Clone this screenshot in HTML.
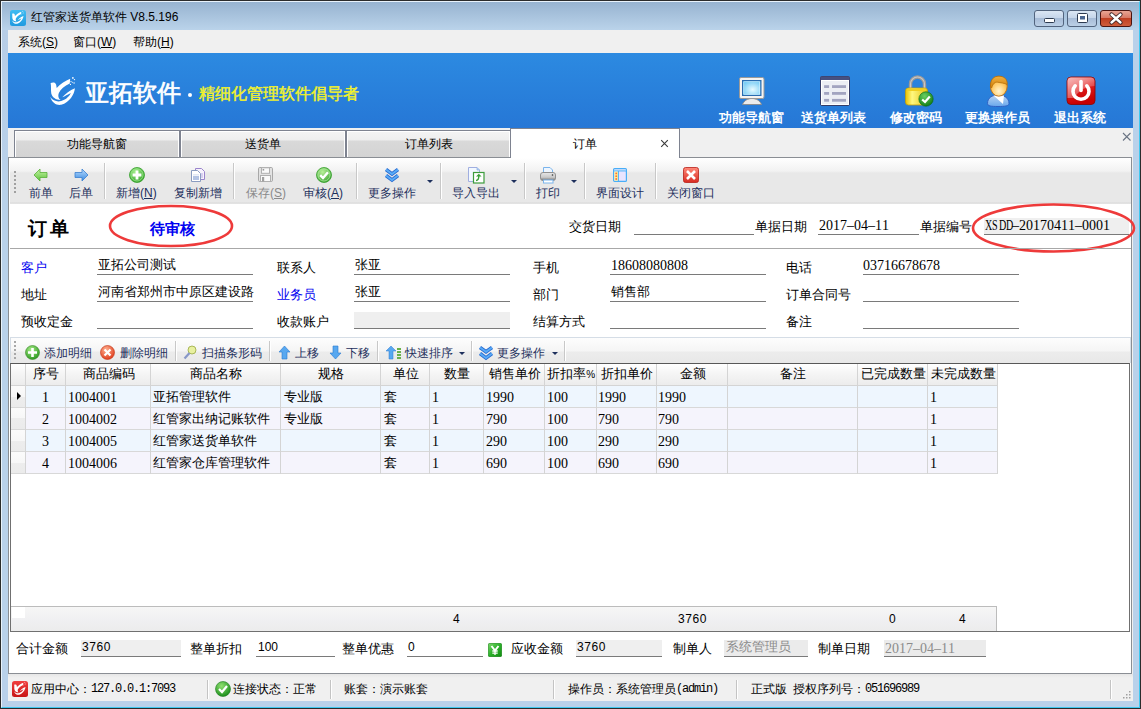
<!DOCTYPE html>
<html><head><meta charset="utf-8">
<style>
*{margin:0;padding:0;box-sizing:border-box}
html,body{width:1141px;height:709px;overflow:hidden}
body{position:relative;background:#b9d1ea;font-family:"Liberation Sans",sans-serif;font-size:13px;color:#000}
.a{position:absolute;white-space:nowrap}
.t{position:absolute;white-space:nowrap;line-height:13px;font-size:13px}
.m{font-family:"Liberation Mono",monospace}
.s{font-family:"Liberation Serif",serif}
</style></head><body>
<!-- window frame -->
<div class="a" style="left:0;top:0;width:1141px;height:709px;border:1px solid #2b2b2b;"></div>
<div class="a" style="left:1px;top:1px;width:1139px;height:707px;border:1px solid #e8f2fb;border-right-color:#3fc8f0;border-bottom-color:#3fc8f0"></div>
<div class="a" style="left:2px;top:2px;width:1137px;height:28px;background:linear-gradient(#97b3d0,#bad3ea)"></div>
<div class="a" style="left:2px;top:30px;width:6px;height:677px;background:linear-gradient(#b7cde6,#b9d1ea 20%)"></div>
<div class="a" style="left:1133px;top:30px;width:6px;height:677px;background:#b9d1ea"></div>

<!-- title -->
<svg class="a" style="left:10px;top:10px" width="16" height="16" viewBox="0 0 16 16"><defs><linearGradient id="lb" x1="0" y1="0" x2="0" y2="1"><stop offset="0" stop-color="#40bcf2"/><stop offset="1" stop-color="#1e9ae0"/></linearGradient></defs><rect x="0" y="0" width="16" height="16" rx="2.5" fill="url(#lb)"/><svg x="0.5" y="0" width="15" height="15" viewBox="40 60 600 600"><g fill="#fff"><path d="M105,205 C150,190 195,190 208,240 L218,300 C290,220 380,160 470,125 L462,215 C360,262 292,322 258,392 C238,442 248,498 292,522 C200,522 132,472 117,402 C106,332 118,262 105,205 Z"/><path d="M558,302 C545,420 462,562 302,612 C222,625 140,592 98,468 C150,542 232,562 302,542 C402,512 452,452 482,392 C422,422 372,452 322,472 C382,402 462,342 558,302 Z"/><circle cx="520" cy="110" r="16"/><circle cx="550" cy="142" r="13"/><circle cx="542" cy="205" r="13"/><circle cx="485" cy="178" r="12"/><circle cx="475" cy="232" r="11"/></g></svg></svg>
<div class="a" style="left:31px;top:11px;font-size:12px;line-height:13px;color:#000">红管家送货单软件 V8.5.196</div>

<!-- window buttons -->
<svg class="a" style="left:1033px;top:9px" width="100" height="19" viewBox="0 0 100 19">
<defs>
<linearGradient id="wbg" x1="0" y1="0" x2="0" y2="1"><stop offset="0" stop-color="#dce7f4"/><stop offset="0.45" stop-color="#c6d6ea"/><stop offset="0.5" stop-color="#a8bdd8"/><stop offset="1" stop-color="#bcd0e6"/></linearGradient>
<linearGradient id="wbr" x1="0" y1="0" x2="0" y2="1"><stop offset="0" stop-color="#eaa898"/><stop offset="0.45" stop-color="#d87a66"/><stop offset="0.5" stop-color="#bf3f22"/><stop offset="1" stop-color="#d0603e"/></linearGradient>
</defs>
<rect x="1.5" y="1.5" width="29" height="16" rx="2.5" fill="url(#wbg)" stroke="#52647e" stroke-width="1"/>
<rect x="34.5" y="1.5" width="29" height="16" rx="2.5" fill="url(#wbg)" stroke="#52647e" stroke-width="1"/>
<rect x="67.5" y="1.5" width="31" height="16" rx="2.5" fill="url(#wbr)" stroke="#4a1410" stroke-width="1"/>
<rect x="11.5" y="9.5" width="10" height="4" rx="1" fill="#fff" stroke="#2c3a50" stroke-width="1"/>
<rect x="44.5" y="4.5" width="10" height="9" rx="1" fill="#fff" stroke="#2c3a50" stroke-width="1"/>
<rect x="47" y="7" width="5" height="3.5" fill="#4a6690" />
<path d="M78.5 5.5 L87.5 13.5 M87.5 5.5 L78.5 13.5" stroke="#3a2020" stroke-width="4.2" stroke-linecap="round"/>
<path d="M78.5 5.5 L87.5 13.5 M87.5 5.5 L78.5 13.5" stroke="#fff" stroke-width="2.4" stroke-linecap="round"/>
</svg>
<!-- menu bar -->
<div class="a" style="left:8px;top:30px;width:1125px;height:23px;background:#f0f0f0"></div>
<div class="a" style="left:18px;top:36px;font-size:12px;line-height:13px">系统(<u>S</u>)</div>
<div class="a" style="left:73px;top:36px;font-size:12px;line-height:13px">窗口(<u>W</u>)</div>
<div class="a" style="left:133px;top:36px;font-size:12px;line-height:13px">帮助(<u>H</u>)</div>

<!-- banner -->
<div class="a" style="left:8px;top:53px;width:1125px;height:75px;background:linear-gradient(#2c8ae1,#2677d6)"></div>


<!-- banner content -->
<svg class="a" style="left:45px;top:72px" width="40" height="38" viewBox="0 0 746 709"><g fill="#fff">
<path d="M105,205 C150,190 195,190 208,240 L218,300 C290,220 380,160 470,125 L462,215 C360,262 292,322 258,392 C238,442 248,498 292,522 C200,522 132,472 117,402 C106,332 118,262 105,205 Z"/>
<path d="M558,302 C545,420 462,562 302,612 C222,625 140,592 98,468 C150,542 232,562 302,542 C402,512 452,452 482,392 C422,422 372,452 322,472 C382,402 462,342 558,302 Z"/>
<circle cx="520" cy="110" r="16"/><circle cx="550" cy="142" r="13"/><circle cx="542" cy="205" r="13"/><circle cx="485" cy="178" r="12"/><circle cx="475" cy="232" r="11"/><circle cx="510" cy="190" r="10"/>
</g></svg>
<div class="a" style="left:85px;top:79px;font-size:23.5px;line-height:28px;color:#fff;letter-spacing:0px;-webkit-text-stroke:0.7px #fff">亚拓软件</div>
<div class="a" style="left:188px;top:93px;width:4px;height:4px;border-radius:2px;background:#fff"></div>
<div class="a" style="left:199px;top:84px;font-size:16px;line-height:20px;color:#f2f22a;-webkit-text-stroke:0.45px #f2f22a">精细化管理软件倡导者</div>

<svg class="a" style="left:738px;top:76px" width="28" height="30" viewBox="0 0 28 30">
 <defs><radialGradient id="scr" cx="0.55" cy="0.6" r="0.7"><stop offset="0" stop-color="#e8fbff"/><stop offset="1" stop-color="#62c4f4"/></radialGradient></defs>
 <path d="M4.5 28.5 C6 24.5 10 22.5 14 22.5 C18 22.5 22 24.5 23.5 28.5Z" fill="#ececec" stroke="#8a8a8a" stroke-width="0.9"/>
 <rect x="1.5" y="1.5" width="24.5" height="21" rx="1.5" fill="#f6f4f2" stroke="#9a9a9a" stroke-width="1"/>
 <rect x="4.6" y="4.6" width="18.3" height="14.8" fill="url(#scr)" stroke="#2a6cb0" stroke-width="1.2"/>
 <rect x="5.8" y="5.8" width="15.9" height="12.4" fill="none" stroke="#d8f4ff" stroke-width="0.6"/>
</svg>
<div class="a" style="left:719px;top:110px;font-size:13px;line-height:16px;font-weight:bold;color:#fff">功能导航窗</div>

<svg class="a" style="left:820px;top:76px" width="30" height="30" viewBox="0 0 30 30">
 <rect x="0.5" y="0.5" width="29" height="29" rx="1.5" fill="#eceef4" stroke="#343c68"/>
 <rect x="0.5" y="0.5" width="29" height="4" fill="#465080"/>
 <rect x="1.5" y="4.5" width="27" height="24" fill="none" stroke="#fff" stroke-width="1"/>
 <rect x="4.1" y="9.2" width="5" height="2.8" fill="#a2a4c0"/><rect x="12" y="9.2" width="14" height="2.8" fill="#a2a4c0"/>
 <rect x="4.1" y="16" width="5" height="2.8" fill="#a2a4c0"/><rect x="12" y="16" width="14" height="2.8" fill="#a2a4c0"/>
 <rect x="4.1" y="22.9" width="5" height="2.8" fill="#a2a4c0"/><rect x="12" y="22.9" width="14" height="2.8" fill="#a2a4c0"/>
</svg>
<div class="a" style="left:801px;top:110px;font-size:13px;line-height:16px;font-weight:bold;color:#fff">送货单列表</div>

<svg class="a" style="left:904px;top:75px" width="30" height="32" viewBox="0 0 30 32">
 <defs><linearGradient id="lk" x1="0" y1="0" x2="1" y2="0"><stop offset="0" stop-color="#e8c000"/><stop offset="0.3" stop-color="#fff880"/><stop offset="1" stop-color="#e0c010"/></linearGradient>
 <radialGradient id="gc" cx="0.4" cy="0.3" r="0.75"><stop offset="0" stop-color="#6ad060"/><stop offset="1" stop-color="#0e7a14"/></radialGradient></defs>
 <path d="M6.5 14 V9 A7 7 0 0 1 20.5 9 V14" fill="none" stroke="#9a9a9a" stroke-width="3.4"/>
 <path d="M6.5 14 V9 A7 7 0 0 1 20.5 9 V14" fill="none" stroke="#c8c8c8" stroke-width="1.2"/>
 <rect x="1.5" y="13" width="22" height="17" rx="3" fill="url(#lk)" stroke="#c8a000" stroke-width="0.8"/>
 <rect x="2.5" y="13.5" width="20" height="2.5" rx="1" fill="#f0d020"/>
 <circle cx="22" cy="24" r="7.2" fill="url(#gc)" stroke="#0a6a10" stroke-width="0.6"/>
 <path d="M18.2 24.5 L21 27 L25.8 21.5" fill="none" stroke="#fff" stroke-width="2.2"/>
</svg>
<div class="a" style="left:890px;top:110px;font-size:13px;line-height:16px;font-weight:bold;color:#fff">修改密码</div>

<svg class="a" style="left:985px;top:74px" width="26" height="34" viewBox="0 0 26 34">
 <defs><radialGradient id="fc" cx="0.5" cy="0.75" r="0.7"><stop offset="0" stop-color="#fff4d0"/><stop offset="0.6" stop-color="#ffc860"/><stop offset="1" stop-color="#f0a018"/></radialGradient>
 <linearGradient id="bd" x1="0" y1="0" x2="0" y2="1"><stop offset="0" stop-color="#b8d4f4"/><stop offset="1" stop-color="#6aa8ec"/></linearGradient>
 <linearGradient id="hr" x1="0" y1="0" x2="0" y2="1"><stop offset="0" stop-color="#f0b040"/><stop offset="1" stop-color="#d08008"/></linearGradient></defs>
 <path d="M2.5 29.5 C2.5 24 7 21 13 21 C19 21 24 24 24 29.5 C24 32 20 32.5 13 32.5 C6 32.5 2.5 32 2.5 29.5Z" fill="url(#bd)" stroke="#2c5cc0" stroke-width="0.9"/>
 <path d="M8.5 21.5 L18 30 L19 21.5Z" fill="#fff"/>
 <ellipse cx="13.8" cy="12.2" rx="8.4" ry="10" fill="url(#fc)" stroke="#c07010" stroke-width="0.9"/>
 <path d="M5.6 13 C5 5 9 2.2 14 2.2 C19 2.2 22.6 5 22.2 10.5 C19 9 15.5 8.8 12.5 8.2 C10 7.8 8 9.5 6.6 14Z" fill="url(#hr)" stroke="#b06a08" stroke-width="0.7"/>
</svg>
<div class="a" style="left:965px;top:110px;font-size:13px;line-height:16px;font-weight:bold;color:#fff">更换操作员</div>

<svg class="a" style="left:1066px;top:76px" width="30" height="30" viewBox="0 0 30 30">
 <defs><linearGradient id="pw" x1="0" y1="0" x2="0.3" y2="1"><stop offset="0" stop-color="#e87070"/><stop offset="0.45" stop-color="#e02020"/><stop offset="1" stop-color="#c80000"/></linearGradient>
 <linearGradient id="pwh" x1="0" y1="0" x2="1" y2="1"><stop offset="0" stop-color="#ffd0d0" stop-opacity="0.75"/><stop offset="1" stop-color="#ffffff" stop-opacity="0"/></linearGradient></defs>
 <rect x="1" y="1" width="28" height="27.5" rx="4" fill="url(#pw)" stroke="#8a0a0a" stroke-width="0.9"/>
 <path d="M1.5 5 Q1.5 1.5 5 1.5 H25 Q28.5 1.5 28.5 5 V10 Q16 10 8 22 H1.5Z" fill="url(#pwh)"/>
 <path d="M9.2 9.8 A8 8 0 1 0 20.8 9.8" fill="none" stroke="#fff" stroke-width="3.6" stroke-linecap="round"/>
 <path d="M15 5.5 V14.5" stroke="#fff" stroke-width="3.6" stroke-linecap="round"/>
</svg>
<div class="a" style="left:1054px;top:110px;font-size:13px;line-height:16px;font-weight:bold;color:#fff">退出系统</div>

<!-- tab strip -->
<div class="a" style="left:8px;top:128px;width:1125px;height:546px;background:#f0f0f0"></div>


<!-- tabs -->
<div class="a" style="left:14px;top:130px;width:166px;height:28px;border:1px solid #7e8390;border-bottom:none;background:linear-gradient(#f4f4f4 0px,#eeeeee 9px,#d9d9d9 10px,#d3d3d3 27px);box-shadow:inset 1px 1px 0 #fff,inset -1px 0 0 #fff"></div>
<div class="a" style="left:67px;top:138px;font-size:12px;line-height:12px">功能导航窗</div>
<div class="a" style="left:180px;top:130px;width:166px;height:28px;border:1px solid #7e8390;border-bottom:none;background:linear-gradient(#f4f4f4 0px,#eeeeee 9px,#d9d9d9 10px,#d3d3d3 27px);box-shadow:inset 1px 1px 0 #fff,inset -1px 0 0 #fff"></div>
<div class="a" style="left:245px;top:138px;font-size:12px;line-height:12px">送货单</div>
<div class="a" style="left:346px;top:130px;width:165px;height:28px;border:1px solid #7e8390;border-bottom:none;background:linear-gradient(#f4f4f4 0px,#eeeeee 9px,#d9d9d9 10px,#d3d3d3 27px);box-shadow:inset 1px 1px 0 #fff,inset -1px 0 0 #fff"></div>
<div class="a" style="left:405px;top:138px;font-size:12px;line-height:12px">订单列表</div>
<!-- content panel -->
<div class="a" style="left:8px;top:157px;width:1124px;height:517px;background:#fff;border:1px solid #8a8e94"></div>


<div class="a" style="left:510px;top:128px;width:170px;height:30px;border:1px solid #7e8390;border-bottom:none;background:#fff"></div>
<div class="t" style="font-size:12px;line-height:12px;left:573px;top:138px;">订单</div>
<svg class="a" style="left:660px;top:139px" width="10" height="10" viewBox="0 0 10 10"><path d="M1.2 1.2 L7.8 7.8 M7.8 1.2 L1.2 7.8" stroke="#3a3a3a" stroke-width="1.1"/></svg>
<svg class="a" style="left:1122px;top:132px" width="10" height="10" viewBox="0 0 10 10"><path d="M1 1 L8.5 8.5 M8.5 1 L1 8.5" stroke="#6a7484" stroke-width="1.1"/></svg>

<!-- toolbar -->
<div class="a" style="left:10px;top:158px;width:1121px;height:46px;background:linear-gradient(#ffffff 0px,#f2f2f2 13px,#e8e8e8 15px,#e8e8e8 44px,#d9d9d9 45px,#ececec 46px)"></div>
<div class="a" style="left:14px;top:171px;width:2px;height:22px;background:repeating-linear-gradient(#a0a0a0 0 2px,transparent 2px 4px)"></div>

<!-- toolbar buttons -->
<svg class="a" style="left:33px;top:168px" width="15" height="14" viewBox="0 0 15 14"><defs><linearGradient id="ga" x1="0" y1="0" x2="0" y2="1"><stop offset="0" stop-color="#c8f5a8"/><stop offset="1" stop-color="#5cc23a"/></linearGradient></defs><path d="M1 7 L7 1 V4.5 H14 V9.5 H7 V13Z" fill="url(#ga)" stroke="#58b038" stroke-width="0.8"/></svg>
<div class="t" style="font-size:12px;line-height:12px;left:29px;top:187px;color:#1d2f5c">前单</div>
<svg class="a" style="left:74px;top:168px" width="15" height="14" viewBox="0 0 15 14"><defs><linearGradient id="ba" x1="0" y1="0" x2="0" y2="1"><stop offset="0" stop-color="#b8dcff"/><stop offset="1" stop-color="#3a8ae0"/></linearGradient></defs><path d="M14 7 L8 1 V4.5 H1 V9.5 H8 V13Z" fill="url(#ba)" stroke="#3a80d0" stroke-width="0.8"/></svg>
<div class="t" style="font-size:12px;line-height:12px;left:69px;top:187px;color:#1d2f5c">后单</div>
<div class="a" style="left:104px;top:163px;width:1px;height:36px;background:#c8c8c8;box-shadow:1px 0 0 #fff"></div>
<svg class="a" style="left:129px;top:167px" width="16" height="16" viewBox="0 0 16 16"><defs><radialGradient id="gp" cx="0.4" cy="0.3" r="0.75"><stop offset="0" stop-color="#a8f090"/><stop offset="1" stop-color="#30a028"/></radialGradient></defs><circle cx="8" cy="8" r="7.5" fill="url(#gp)" stroke="#36a02c" stroke-width="0.8"/><circle cx="8" cy="8" r="6" fill="none" stroke="#98e488" stroke-width="0.8"/><path d="M8 3.6 V12.4 M3.6 8 H12.4" stroke="#fff" stroke-width="2.8"/></svg>
<div class="t" style="font-size:12px;line-height:12px;left:116px;top:187px;color:#1d2f5c">新增(<u>N</u>)</div>
<svg class="a" style="left:190px;top:167px" width="16" height="16" viewBox="0 0 16 16"><path d="M5.5 1.5 H11.5 L14.5 4.5 V12.5 H5.5Z" fill="#f6f2fc" stroke="#9a84cc" stroke-width="1"/><rect x="11" y="6" width="2" height="5" fill="#d8cff0"/><path d="M1.5 3.5 H7.5 L10.5 6.5 V14.5 H1.5Z" fill="#fff" stroke="#8a9cc0" stroke-width="1"/><rect x="3" y="9" width="6" height="4" fill="#b4c4e4"/><rect x="3" y="7.5" width="6" height="0.8" fill="#c8d4ec"/></svg>
<div class="t" style="font-size:12px;line-height:12px;left:174px;top:187px;color:#1d2f5c">复制新增</div>
<div class="a" style="left:233px;top:163px;width:1px;height:36px;background:#c8c8c8;box-shadow:1px 0 0 #fff"></div>
<svg class="a" style="left:258px;top:167px" width="15" height="15" viewBox="0 0 15 15"><rect x="0.5" y="0.5" width="14" height="14" rx="1.2" fill="#e2e2e2" stroke="#a8a8a8" stroke-width="1"/><rect x="3.5" y="0.8" width="8" height="5.5" fill="#fafafa" stroke="#b0b0b0" stroke-width="1"/><rect x="4.6" y="2" width="1.6" height="1.6" fill="#999"/><rect x="2.5" y="8.5" width="10" height="6" fill="#fafafa" stroke="#b0b0b0" stroke-width="1"/><rect x="4" y="10" width="2.2" height="4.5" fill="#a0a0a0"/></svg>
<div class="t" style="font-size:12px;line-height:12px;left:246px;top:187px;color:#8a8a8a">保存(<u>S</u>)</div>
<svg class="a" style="left:316px;top:167px" width="16" height="16" viewBox="0 0 16 16"><defs><radialGradient id="gk" cx="0.4" cy="0.3" r="0.75"><stop offset="0" stop-color="#b8f098"/><stop offset="1" stop-color="#38a030"/></radialGradient></defs><circle cx="8" cy="8" r="7.5" fill="url(#gk)" stroke="#36a02c" stroke-width="0.8"/><circle cx="8" cy="8" r="6" fill="none" stroke="#a8e898" stroke-width="0.8"/><path d="M4.2 8.2 L7 11 L12 5.2" fill="none" stroke="#fff" stroke-width="2.4"/></svg>
<div class="t" style="font-size:12px;line-height:12px;left:303px;top:187px;color:#1d2f5c">审核(<u>A</u>)</div>
<div class="a" style="left:356px;top:163px;width:1px;height:36px;background:#c8c8c8;box-shadow:1px 0 0 #fff"></div>
<svg class="a" style="left:384px;top:166px" width="16" height="17" viewBox="0 0 16 17"><g fill="none" stroke-linejoin="miter" stroke-linecap="butt"><path d="M2 3.5 L8 8 L14 3.5" stroke="#2c6cd0" stroke-width="3.6"/><path d="M2 3.5 L8 8 L14 3.5" stroke="#58acf8" stroke-width="1.8"/><path d="M2 9.5 L8 14 L14 9.5" stroke="#2c6cd0" stroke-width="3.6"/><path d="M2 9.5 L8 14 L14 9.5" stroke="#58acf8" stroke-width="1.8"/></g></svg>
<div class="t" style="font-size:12px;line-height:12px;left:368px;top:187px;color:#1d2f5c">更多操作</div>
<div class="a" style="left:427px;top:180px;width:0;height:0;border-left:3px solid transparent;border-right:3px solid transparent;border-top:3px solid #1d2f5c"></div>
<div class="a" style="left:440px;top:163px;width:1px;height:36px;background:#c8c8c8;box-shadow:1px 0 0 #fff"></div>
<svg class="a" style="left:467px;top:166px" width="18" height="18" viewBox="0 0 18 18"><path d="M1.5 1.5 H10 L12.5 4 V15.5 H1.5Z" fill="#f2f8ff" stroke="#a0aee0" stroke-width="1"/><path d="M10 1.5 V4 H12.5" fill="#9cd4f8" stroke="#a0aee0" stroke-width="0.8"/><rect x="6.5" y="6.5" width="10.5" height="10.5" fill="#fff" stroke="#3c9c3c" stroke-width="1.2"/><path d="M9 10.5 L11.8 7.8 L14.6 10.5Z" fill="#3aa03a"/><path d="M11.8 10 C11.8 13 11 14.5 9 14.5" fill="none" stroke="#3aa03a" stroke-width="1.4"/></svg>
<div class="t" style="font-size:12px;line-height:12px;left:452px;top:187px;color:#1d2f5c">导入导出</div>
<div class="a" style="left:511px;top:180px;width:0;height:0;border-left:3px solid transparent;border-right:3px solid transparent;border-top:3px solid #1d2f5c"></div>
<div class="a" style="left:524px;top:163px;width:1px;height:36px;background:#c8c8c8;box-shadow:1px 0 0 #fff"></div>
<svg class="a" style="left:539px;top:166px" width="18" height="18" viewBox="0 0 18 18"><defs><linearGradient id="pr" x1="0" y1="0" x2="0" y2="1"><stop offset="0" stop-color="#e8e8e8"/><stop offset="0.6" stop-color="#c8c8c8"/><stop offset="1" stop-color="#707070"/></linearGradient></defs><path d="M4.5 1.5 H11 L13.5 4 V7 H4.5Z" fill="#eef6ff" stroke="#7ab4ec" stroke-width="1"/><rect x="1.5" y="6.5" width="15" height="8" rx="2.5" fill="url(#pr)" stroke="#909090" stroke-width="1"/><circle cx="13.5" cy="9" r="0.8" fill="#333"/><rect x="4.5" y="14" width="9.5" height="3" fill="#fff" stroke="#7ab4ec" stroke-width="1"/></svg>
<div class="t" style="font-size:12px;line-height:12px;left:536px;top:187px;color:#1d2f5c">打印</div>
<div class="a" style="left:571px;top:180px;width:0;height:0;border-left:3px solid transparent;border-right:3px solid transparent;border-top:3px solid #1d2f5c"></div>
<div class="a" style="left:584px;top:163px;width:1px;height:36px;background:#c8c8c8;box-shadow:1px 0 0 #fff"></div>
<svg class="a" style="left:613px;top:168px" width="14" height="14" viewBox="0 0 14 14"><rect x="0.6" y="0.6" width="12.8" height="12.8" rx="1" fill="#e8e4ff" stroke="#48aef8" stroke-width="1.2"/><rect x="1.5" y="1.5" width="11" height="1.6" fill="#bcdcfc"/><line x1="0.6" y1="3" x2="13.4" y2="3" stroke="#48aef8" stroke-width="0.8"/><rect x="1.4" y="3.6" width="3.6" height="9" fill="#fff090"/><line x1="5.4" y1="3" x2="5.4" y2="13.4" stroke="#48aef8" stroke-width="1"/><circle cx="3.2" cy="5.4" r="0.9" fill="#ff6a3a"/><circle cx="3.2" cy="8.2" r="0.9" fill="#ff6a3a"/><circle cx="3.2" cy="11" r="0.9" fill="#ff6a3a"/></svg>
<div class="t" style="font-size:12px;line-height:12px;left:596px;top:187px;color:#1d2f5c">界面设计</div>
<div class="a" style="left:655px;top:163px;width:1px;height:36px;background:#c8c8c8;box-shadow:1px 0 0 #fff"></div>
<svg class="a" style="left:683px;top:167px" width="16" height="16" viewBox="0 0 16 16"><defs><linearGradient id="rc" x1="0" y1="0" x2="0" y2="1"><stop offset="0" stop-color="#ff8a7a"/><stop offset="1" stop-color="#d82a20"/></linearGradient></defs><rect x="0.5" y="0.5" width="15" height="15" rx="2" fill="url(#rc)" stroke="#b82018" stroke-width="0.8"/><path d="M4 4 L12 12 M12 4 L4 12" stroke="#fff" stroke-width="2.6"/></svg>
<div class="t" style="font-size:12px;line-height:12px;left:667px;top:187px;color:#1d2f5c">关闭窗口</div>

<!-- header -->
<div class="a" style="left:28px;top:218px;font-size:19px;line-height:22px;font-weight:bold;letter-spacing:3px">订单</div>
<div class="a" style="left:150px;top:220px;font-size:15px;line-height:17px;font-weight:bold;color:#0000f0">待审核</div>
<svg class="a" style="left:108px;top:204px" width="126" height="44" viewBox="0 0 126 44"><ellipse cx="63" cy="22" rx="61" ry="20" fill="none" stroke="#ee3a3a" stroke-width="2.6"/></svg>
<div class="t" style="left:569px;top:220px;color:#000;">交货日期</div>
<div class="a" style="left:634px;top:218px;width:120px;height:17px;border-bottom:1px solid #7a7a7a;"></div>
<div class="t" style="left:755px;top:220px;color:#000;">单据日期</div>
<div class="a" style="left:818px;top:218px;width:101px;height:17px;border-bottom:1px solid #7a7a7a;"></div>
<div class="a" style="left:819px;top:219px;font-family:'Liberation Serif',serif;font-size:14px;line-height:13px;white-space:nowrap;color:#000"><span style="display:inline-block;width:7px;text-align:center">2</span><span style="display:inline-block;width:7px;text-align:center">0</span><span style="display:inline-block;width:7px;text-align:center">1</span><span style="display:inline-block;width:7px;text-align:center">7</span><span style="display:inline-block;width:7px;text-align:center">–</span><span style="display:inline-block;width:7px;text-align:center">0</span><span style="display:inline-block;width:7px;text-align:center">4</span><span style="display:inline-block;width:7px;text-align:center">–</span><span style="display:inline-block;width:7px;text-align:center">1</span><span style="display:inline-block;width:7px;text-align:center">1</span></div>
<div class="t" style="left:920px;top:220px;color:#000;">单据编号</div>
<div class="a" style="left:984px;top:218px;width:145px;height:17px;border-bottom:1px solid #7a7a7a;background:#efefef;"></div>
<div class="a" style="left:984px;top:219px;font-family:'Liberation Serif',serif;font-size:14px;line-height:13px;white-space:nowrap;color:#000"><span style="display:inline-block;width:7px;text-align:center;transform:scaleX(0.72)">X</span><span style="display:inline-block;width:7px;text-align:center;transform:scaleX(0.72)">S</span><span style="display:inline-block;width:7px;text-align:center;transform:scaleX(0.72)">D</span><span style="display:inline-block;width:7px;text-align:center;transform:scaleX(0.72)">D</span><span style="display:inline-block;width:7px;text-align:center">–</span><span style="display:inline-block;width:7px;text-align:center">2</span><span style="display:inline-block;width:7px;text-align:center">0</span><span style="display:inline-block;width:7px;text-align:center">1</span><span style="display:inline-block;width:7px;text-align:center">7</span><span style="display:inline-block;width:7px;text-align:center">0</span><span style="display:inline-block;width:7px;text-align:center">4</span><span style="display:inline-block;width:7px;text-align:center">1</span><span style="display:inline-block;width:7px;text-align:center">1</span><span style="display:inline-block;width:7px;text-align:center">–</span><span style="display:inline-block;width:7px;text-align:center">0</span><span style="display:inline-block;width:7px;text-align:center">0</span><span style="display:inline-block;width:7px;text-align:center">0</span><span style="display:inline-block;width:7px;text-align:center">1</span></div>
<svg class="a" style="left:971px;top:202px" width="165" height="52" viewBox="0 0 165 52"><ellipse cx="82.5" cy="26" rx="80.5" ry="23.5" fill="none" stroke="#ee3a3a" stroke-width="2.6"/></svg>
<div class="a" style="left:10px;top:248px;width:1121px;height:1px;background:#a8a8a8"></div>
<div class="t" style="left:21px;top:261px;color:#0000f0;">客户</div>
<div class="t" style="left:21px;top:288px;color:#000;">地址</div>
<div class="t" style="left:21px;top:315px;color:#000;">预收定金</div>
<div class="a" style="left:97px;top:258px;width:156px;height:17px;border-bottom:1px solid #7a7a7a;"></div>
<div class="a" style="left:97px;top:285px;width:156px;height:17px;border-bottom:1px solid #7a7a7a;"></div>
<div class="a" style="left:97px;top:312px;width:156px;height:17px;border-bottom:1px solid #7a7a7a;"></div>
<div class="t" style="left:98px;top:258px;color:#000;">亚拓公司测试</div>
<div class="t" style="left:98px;top:285px;color:#000;">河南省郑州市中原区建设路</div>
<div class="t" style="left:277px;top:261px;color:#000;">联系人</div>
<div class="t" style="left:277px;top:288px;color:#0000f0;">业务员</div>
<div class="t" style="left:277px;top:315px;color:#000;">收款账户</div>
<div class="a" style="left:354px;top:258px;width:156px;height:17px;border-bottom:1px solid #7a7a7a;"></div>
<div class="a" style="left:354px;top:285px;width:156px;height:17px;border-bottom:1px solid #7a7a7a;"></div>
<div class="a" style="left:354px;top:312px;width:156px;height:17px;border-bottom:1px solid #7a7a7a;background:#efefef;"></div>
<div class="t" style="left:355px;top:258px;color:#000;">张亚</div>
<div class="t" style="left:355px;top:285px;color:#000;">张亚</div>
<div class="t" style="left:533px;top:261px;color:#000;">手机</div>
<div class="t" style="left:533px;top:288px;color:#000;">部门</div>
<div class="t" style="left:533px;top:315px;color:#000;">结算方式</div>
<div class="a" style="left:610px;top:258px;width:156px;height:17px;border-bottom:1px solid #7a7a7a;"></div>
<div class="a" style="left:610px;top:285px;width:156px;height:17px;border-bottom:1px solid #7a7a7a;"></div>
<div class="a" style="left:610px;top:312px;width:156px;height:17px;border-bottom:1px solid #7a7a7a;"></div>
<div class="a" style="left:611px;top:259px;font-family:'Liberation Serif',serif;font-size:14px;line-height:13px;white-space:nowrap;color:#000"><span style="display:inline-block;width:7px;text-align:center">1</span><span style="display:inline-block;width:7px;text-align:center">8</span><span style="display:inline-block;width:7px;text-align:center">6</span><span style="display:inline-block;width:7px;text-align:center">0</span><span style="display:inline-block;width:7px;text-align:center">8</span><span style="display:inline-block;width:7px;text-align:center">0</span><span style="display:inline-block;width:7px;text-align:center">8</span><span style="display:inline-block;width:7px;text-align:center">0</span><span style="display:inline-block;width:7px;text-align:center">8</span><span style="display:inline-block;width:7px;text-align:center">0</span><span style="display:inline-block;width:7px;text-align:center">8</span></div>
<div class="t" style="left:611px;top:285px;color:#000;">销售部</div>
<div class="t" style="left:786px;top:261px;color:#000;">电话</div>
<div class="t" style="left:786px;top:288px;color:#000;">订单合同号</div>
<div class="t" style="left:786px;top:315px;color:#000;">备注</div>
<div class="a" style="left:863px;top:258px;width:156px;height:17px;border-bottom:1px solid #7a7a7a;"></div>
<div class="a" style="left:863px;top:285px;width:156px;height:17px;border-bottom:1px solid #7a7a7a;"></div>
<div class="a" style="left:863px;top:312px;width:156px;height:17px;border-bottom:1px solid #7a7a7a;"></div>
<div class="a" style="left:863px;top:259px;font-family:'Liberation Serif',serif;font-size:14px;line-height:13px;white-space:nowrap;color:#000"><span style="display:inline-block;width:7px;text-align:center">0</span><span style="display:inline-block;width:7px;text-align:center">3</span><span style="display:inline-block;width:7px;text-align:center">7</span><span style="display:inline-block;width:7px;text-align:center">1</span><span style="display:inline-block;width:7px;text-align:center">6</span><span style="display:inline-block;width:7px;text-align:center">6</span><span style="display:inline-block;width:7px;text-align:center">7</span><span style="display:inline-block;width:7px;text-align:center">8</span><span style="display:inline-block;width:7px;text-align:center">6</span><span style="display:inline-block;width:7px;text-align:center">7</span><span style="display:inline-block;width:7px;text-align:center">8</span></div>

<!-- detail toolbar -->
<div class="a" style="left:10px;top:337px;width:1121px;height:26px;border:1px solid #d5dde6;border-bottom:none;background:linear-gradient(#fdfdfd 0px,#f5f5f5 13px,#ececec 14px,#e8e8e8 25px)"></div>
<div class="a" style="left:14px;top:341px;width:2px;height:20px;background:repeating-linear-gradient(#a8a8a8 0 2px,transparent 2px 4px)"></div>
<svg class="a" style="left:25px;top:345px" width="15" height="15" viewBox="0 0 15 15"><defs><radialGradient id="gp2" cx="0.4" cy="0.3" r="0.7"><stop offset="0" stop-color="#a8ec88"/><stop offset="1" stop-color="#2e9a22"/></radialGradient></defs><circle cx="7.5" cy="7.5" r="7" fill="url(#gp2)" stroke="#3a8a2a" stroke-width="0.6"/><path d="M7.5 3 V12 M3 7.5 H12" stroke="#fff" stroke-width="2.6"/></svg>
<div class="t" style="font-size:12px;line-height:12px;left:44px;top:347px;color:#1d2f5c;">添加明细</div>
<svg class="a" style="left:100px;top:345px" width="15" height="15" viewBox="0 0 15 15"><defs><radialGradient id="rd2" cx="0.4" cy="0.3" r="0.7"><stop offset="0" stop-color="#ffb090"/><stop offset="1" stop-color="#e04020"/></radialGradient></defs><circle cx="7.5" cy="7.5" r="7" fill="url(#rd2)" stroke="#c03010" stroke-width="0.6"/><path d="M4.5 4.5 L10.5 10.5 M10.5 4.5 L4.5 10.5" stroke="#fff" stroke-width="2.2"/></svg>
<div class="t" style="font-size:12px;line-height:12px;left:120px;top:347px;color:#1d2f5c;">删除明细</div>
<div class="a" style="left:175px;top:341px;width:1px;height:20px;background:#c8c8c8;box-shadow:1px 0 0 #fff"></div>
<svg class="a" style="left:183px;top:345px" width="14" height="15" viewBox="0 0 14 15"><circle cx="9" cy="5" r="4" fill="#e8f0a0" stroke="#98a840" stroke-width="0.8"/><path d="M6.5 8 L1.5 13.5" stroke="#8898c8" stroke-width="2.2"/></svg>
<div class="t" style="font-size:12px;line-height:12px;left:202px;top:347px;color:#1d2f5c;">扫描条形码</div>
<div class="a" style="left:269px;top:341px;width:1px;height:20px;background:#c8c8c8;box-shadow:1px 0 0 #fff"></div>
<svg class="a" style="left:278px;top:345px" width="13" height="15" viewBox="0 0 13 15"><path d="M6.5 1 L12 7 H9 V14 H4 V7 H1Z" fill="#58a8f0" stroke="#2a78d0" stroke-width="0.6"/></svg>
<div class="t" style="font-size:12px;line-height:12px;left:295px;top:347px;color:#1d2f5c;">上移</div>
<svg class="a" style="left:329px;top:345px" width="13" height="15" viewBox="0 0 13 15"><path d="M6.5 14 L12 8 H9 V1 H4 V8 H1Z" fill="#58a8f0" stroke="#2a78d0" stroke-width="0.6"/></svg>
<div class="t" style="font-size:12px;line-height:12px;left:346px;top:347px;color:#1d2f5c;">下移</div>
<div class="a" style="left:377px;top:341px;width:1px;height:20px;background:#c8c8c8;box-shadow:1px 0 0 #fff"></div>
<svg class="a" style="left:386px;top:345px" width="16" height="15" viewBox="0 0 16 15"><path d="M5 1 L10 6 H7 V14 H3 V6 H0Z" fill="#58a8f0" stroke="#2a78d0" stroke-width="0.5"/><rect x="11" y="3" width="4" height="2" fill="#6ab04a"/><rect x="11" y="6" width="4" height="2" fill="#6ab04a"/><rect x="11" y="9" width="4" height="2" fill="#6ab04a"/><rect x="11" y="12" width="4" height="2" fill="#6ab04a"/></svg>
<div class="t" style="font-size:12px;line-height:12px;left:405px;top:347px;color:#1d2f5c;">快速排序</div>
<div class="a" style="left:459px;top:352px;width:0;height:0;border-left:3px solid transparent;border-right:3px solid transparent;border-top:3px solid #1d2f5c"></div>
<div class="a" style="left:471px;top:341px;width:1px;height:20px;background:#c8c8c8;box-shadow:1px 0 0 #fff"></div>
<svg class="a" style="left:478px;top:344px" width="16" height="17" viewBox="0 0 16 17"><g fill="none"><path d="M2 3.5 L8 7.8 L14 3.5" stroke="#2c6cd0" stroke-width="3.6"/><path d="M2 3.5 L8 7.8 L14 3.5" stroke="#58acf8" stroke-width="1.8"/><path d="M2 9.5 L8 14 L14 9.5" stroke="#2c6cd0" stroke-width="3.6"/><path d="M2 9.5 L8 14 L14 9.5" stroke="#58acf8" stroke-width="1.8"/></g></svg>
<div class="t" style="font-size:12px;line-height:12px;left:497px;top:347px;color:#1d2f5c;">更多操作</div>
<div class="a" style="left:552px;top:352px;width:0;height:0;border-left:3px solid transparent;border-right:3px solid transparent;border-top:3px solid #1d2f5c"></div>
<div class="a" style="left:564px;top:341px;width:1px;height:20px;background:#c8c8c8;box-shadow:1px 0 0 #fff"></div>
<!-- grid -->
<div class="a" style="left:10px;top:363px;width:1120px;height:269px;border:1px solid #707070;border-top:1px solid #585858;background:#fff"></div>
<div class="a" style="left:11px;top:364px;width:986px;height:22px;background:linear-gradient(#ffffff 0%,#f5f5f5 45%,#ececec 100%);border-bottom:1px solid #d4d4d4"></div>
<div class="a" style="left:25px;top:386px;width:972px;height:22px;background:#eef6fe;border-bottom:1px solid #d8d8d8"></div>
<div class="a" style="left:11px;top:386px;width:14px;height:22px;background:linear-gradient(#fbfbfb 0,#f7f7f7 50%,#ededed 50%,#ebebeb 100%);border-bottom:1px solid #d8d8d8"></div>
<div class="a" style="left:25px;top:408px;width:972px;height:22px;background:#f5f4fc;border-bottom:1px solid #d8d8d8"></div>
<div class="a" style="left:11px;top:408px;width:14px;height:22px;background:linear-gradient(#fbfbfb 0,#f7f7f7 50%,#ededed 50%,#ebebeb 100%);border-bottom:1px solid #d8d8d8"></div>
<div class="a" style="left:25px;top:430px;width:972px;height:22px;background:#eef6fe;border-bottom:1px solid #d8d8d8"></div>
<div class="a" style="left:11px;top:430px;width:14px;height:22px;background:linear-gradient(#fbfbfb 0,#f7f7f7 50%,#ededed 50%,#ebebeb 100%);border-bottom:1px solid #d8d8d8"></div>
<div class="a" style="left:25px;top:452px;width:972px;height:22px;background:#f5f4fc;border-bottom:1px solid #d8d8d8"></div>
<div class="a" style="left:11px;top:452px;width:14px;height:22px;background:linear-gradient(#fbfbfb 0,#f7f7f7 50%,#ededed 50%,#ebebeb 100%);border-bottom:1px solid #d8d8d8"></div>
<div class="a" style="left:25px;top:364px;width:1px;height:110px;background:#d4d4d4"></div>
<div class="a" style="left:65px;top:364px;width:1px;height:110px;background:#d4d4d4"></div>
<div class="a" style="left:150px;top:364px;width:1px;height:110px;background:#d4d4d4"></div>
<div class="a" style="left:280px;top:364px;width:1px;height:110px;background:#d4d4d4"></div>
<div class="a" style="left:380px;top:364px;width:1px;height:110px;background:#d4d4d4"></div>
<div class="a" style="left:429px;top:364px;width:1px;height:110px;background:#d4d4d4"></div>
<div class="a" style="left:483px;top:364px;width:1px;height:110px;background:#d4d4d4"></div>
<div class="a" style="left:544px;top:364px;width:1px;height:110px;background:#d4d4d4"></div>
<div class="a" style="left:596px;top:364px;width:1px;height:110px;background:#d4d4d4"></div>
<div class="a" style="left:656px;top:364px;width:1px;height:110px;background:#d4d4d4"></div>
<div class="a" style="left:727px;top:364px;width:1px;height:110px;background:#d4d4d4"></div>
<div class="a" style="left:857px;top:364px;width:1px;height:110px;background:#d4d4d4"></div>
<div class="a" style="left:927px;top:364px;width:1px;height:110px;background:#d4d4d4"></div>
<div class="a" style="left:997px;top:364px;width:1px;height:110px;background:#d4d4d4"></div>
<div class="a" style="left:17px;top:392px;width:0;height:0;border-top:4px solid transparent;border-bottom:4px solid transparent;border-left:4px solid #000"></div>
<div class="t" style="left:26px;top:367px;width:40px;text-align:center">序号</div>
<div class="t" style="left:66px;top:367px;width:85px;text-align:center">商品编码</div>
<div class="t" style="left:151px;top:367px;width:130px;text-align:center">商品名称</div>
<div class="t" style="left:281px;top:367px;width:100px;text-align:center">规格</div>
<div class="t" style="left:381px;top:367px;width:49px;text-align:center">单位</div>
<div class="t" style="left:430px;top:367px;width:54px;text-align:center">数量</div>
<div class="t" style="left:484px;top:367px;width:61px;text-align:center">销售单价</div>
<div class="t" style="left:545px;top:367px;width:52px;text-align:center">折扣率<span style="font-size:10px;letter-spacing:-0.5px">%</span></div>
<div class="t" style="left:597px;top:367px;width:60px;text-align:center">折扣单价</div>
<div class="t" style="left:657px;top:367px;width:71px;text-align:center">金额</div>
<div class="t" style="left:728px;top:367px;width:130px;text-align:center">备注</div>
<div class="t" style="left:858px;top:367px;width:70px;text-align:center">已完成数量</div>
<div class="t" style="left:928px;top:367px;width:70px;text-align:center">未完成数量</div>
<div class="a" style="left:42px;top:391px;font-family:'Liberation Serif',serif;font-size:14px;line-height:13px;color:#000">1</div>
<div class="a" style="left:68px;top:391px;font-family:'Liberation Serif',serif;font-size:14px;line-height:13px;color:#000">1004001</div>
<div class="t" style="left:153px;top:390px;color:#000;">亚拓管理软件</div>
<div class="t" style="left:284px;top:390px;color:#000;">专业版</div>
<div class="t" style="left:384px;top:390px;color:#000;">套</div>
<div class="a" style="left:432px;top:391px;font-family:'Liberation Serif',serif;font-size:14px;line-height:13px;color:#000">1</div>
<div class="a" style="left:486px;top:391px;font-family:'Liberation Serif',serif;font-size:14px;line-height:13px;color:#000">1990</div>
<div class="a" style="left:547px;top:391px;font-family:'Liberation Serif',serif;font-size:14px;line-height:13px;color:#000">100</div>
<div class="a" style="left:598px;top:391px;font-family:'Liberation Serif',serif;font-size:14px;line-height:13px;color:#000">1990</div>
<div class="a" style="left:658px;top:391px;font-family:'Liberation Serif',serif;font-size:14px;line-height:13px;color:#000">1990</div>
<div class="a" style="left:930px;top:391px;font-family:'Liberation Serif',serif;font-size:14px;line-height:13px;color:#000">1</div>
<div class="a" style="left:42px;top:413px;font-family:'Liberation Serif',serif;font-size:14px;line-height:13px;color:#000">2</div>
<div class="a" style="left:68px;top:413px;font-family:'Liberation Serif',serif;font-size:14px;line-height:13px;color:#000">1004002</div>
<div class="t" style="left:153px;top:412px;color:#000;">红管家出纳记账软件</div>
<div class="t" style="left:284px;top:412px;color:#000;">专业版</div>
<div class="t" style="left:384px;top:412px;color:#000;">套</div>
<div class="a" style="left:432px;top:413px;font-family:'Liberation Serif',serif;font-size:14px;line-height:13px;color:#000">1</div>
<div class="a" style="left:486px;top:413px;font-family:'Liberation Serif',serif;font-size:14px;line-height:13px;color:#000">790</div>
<div class="a" style="left:547px;top:413px;font-family:'Liberation Serif',serif;font-size:14px;line-height:13px;color:#000">100</div>
<div class="a" style="left:598px;top:413px;font-family:'Liberation Serif',serif;font-size:14px;line-height:13px;color:#000">790</div>
<div class="a" style="left:658px;top:413px;font-family:'Liberation Serif',serif;font-size:14px;line-height:13px;color:#000">790</div>
<div class="a" style="left:930px;top:413px;font-family:'Liberation Serif',serif;font-size:14px;line-height:13px;color:#000">1</div>
<div class="a" style="left:42px;top:435px;font-family:'Liberation Serif',serif;font-size:14px;line-height:13px;color:#000">3</div>
<div class="a" style="left:68px;top:435px;font-family:'Liberation Serif',serif;font-size:14px;line-height:13px;color:#000">1004005</div>
<div class="t" style="left:153px;top:434px;color:#000;">红管家送货单软件</div>
<div class="t" style="left:284px;top:434px;color:#000;"></div>
<div class="t" style="left:384px;top:434px;color:#000;">套</div>
<div class="a" style="left:432px;top:435px;font-family:'Liberation Serif',serif;font-size:14px;line-height:13px;color:#000">1</div>
<div class="a" style="left:486px;top:435px;font-family:'Liberation Serif',serif;font-size:14px;line-height:13px;color:#000">290</div>
<div class="a" style="left:547px;top:435px;font-family:'Liberation Serif',serif;font-size:14px;line-height:13px;color:#000">100</div>
<div class="a" style="left:598px;top:435px;font-family:'Liberation Serif',serif;font-size:14px;line-height:13px;color:#000">290</div>
<div class="a" style="left:658px;top:435px;font-family:'Liberation Serif',serif;font-size:14px;line-height:13px;color:#000">290</div>
<div class="a" style="left:930px;top:435px;font-family:'Liberation Serif',serif;font-size:14px;line-height:13px;color:#000">1</div>
<div class="a" style="left:42px;top:457px;font-family:'Liberation Serif',serif;font-size:14px;line-height:13px;color:#000">4</div>
<div class="a" style="left:68px;top:457px;font-family:'Liberation Serif',serif;font-size:14px;line-height:13px;color:#000">1004006</div>
<div class="t" style="left:153px;top:456px;color:#000;">红管家仓库管理软件</div>
<div class="t" style="left:284px;top:456px;color:#000;"></div>
<div class="t" style="left:384px;top:456px;color:#000;">套</div>
<div class="a" style="left:432px;top:457px;font-family:'Liberation Serif',serif;font-size:14px;line-height:13px;color:#000">1</div>
<div class="a" style="left:486px;top:457px;font-family:'Liberation Serif',serif;font-size:14px;line-height:13px;color:#000">690</div>
<div class="a" style="left:547px;top:457px;font-family:'Liberation Serif',serif;font-size:14px;line-height:13px;color:#000">100</div>
<div class="a" style="left:598px;top:457px;font-family:'Liberation Serif',serif;font-size:14px;line-height:13px;color:#000">690</div>
<div class="a" style="left:658px;top:457px;font-family:'Liberation Serif',serif;font-size:14px;line-height:13px;color:#000">690</div>
<div class="a" style="left:930px;top:457px;font-family:'Liberation Serif',serif;font-size:14px;line-height:13px;color:#000">1</div>
<div class="a" style="left:11px;top:606px;width:986px;height:25px;background:linear-gradient(#f6f6f6,#f0f0f2 50%,#ececec);border-top:1px solid #bcbcbc;border-right:1px solid #bcbcbc"></div>
<div class="a" style="left:12px;top:607px;width:13px;height:11px;background:#fff"></div>
<div class="a" style="left:453px;top:613px;font-family:'Liberation Sans',sans-serif;font-size:12px;line-height:12px;color:#000">4</div>
<div class="a" style="left:678px;top:613px;font-family:'Liberation Sans',sans-serif;font-size:12px;line-height:12px;color:#000;letter-spacing:0.6px">3760</div>
<div class="a" style="left:889px;top:613px;font-family:'Liberation Sans',sans-serif;font-size:12px;line-height:12px;color:#000">0</div>
<div class="a" style="left:959px;top:613px;font-family:'Liberation Sans',sans-serif;font-size:12px;line-height:12px;color:#000">4</div>
<!-- footer -->
<div class="t" style="left:16px;top:642px;color:#000;">合计金额</div>
<div class="a" style="left:81px;top:640px;width:100px;height:17px;border-bottom:1px solid #7a7a7a;background:#efefef;"></div>
<div class="a" style="left:82px;top:641px;font-family:'Liberation Sans',sans-serif;font-size:12px;line-height:12px;color:#000;letter-spacing:0.6px">3760</div>
<div class="t" style="left:190px;top:642px;color:#000;">整单折扣</div>
<div class="a" style="left:256px;top:640px;width:79px;height:17px;border-bottom:1px solid #7a7a7a;"></div>
<div class="a" style="left:258px;top:641px;font-family:'Liberation Sans',sans-serif;font-size:12px;line-height:12px;color:#000">100</div>
<div class="t" style="left:342px;top:642px;color:#000;">整单优惠</div>
<div class="a" style="left:407px;top:640px;width:76px;height:17px;border-bottom:1px solid #7a7a7a;"></div>
<div class="a" style="left:408px;top:641px;font-family:'Liberation Sans',sans-serif;font-size:12px;line-height:12px;color:#000">0</div>
<svg class="a" style="left:488px;top:643px" width="14" height="14" viewBox="0 0 14 14"><defs><linearGradient id="yn" x1="0" y1="0" x2="1" y2="1"><stop offset="0" stop-color="#7cd86a"/><stop offset="0.5" stop-color="#2cb02a"/><stop offset="1" stop-color="#108a10"/></linearGradient></defs><rect x="0.3" y="0.3" width="13.4" height="13.4" rx="1.5" fill="url(#yn)" stroke="#0a7a0a" stroke-width="0.6"/><path d="M3.5 3 L7 7.5 L10.5 3" fill="none" stroke="#fff" stroke-width="2"/><path d="M7 7 V12 M4.3 8 H9.7 M4.3 10.2 H9.7" fill="none" stroke="#fff" stroke-width="1.3"/></svg>
<div class="t" style="left:511px;top:642px;color:#000;">应收金额</div>
<div class="a" style="left:576px;top:640px;width:86px;height:17px;border-bottom:1px solid #7a7a7a;background:#efefef;"></div>
<div class="a" style="left:577px;top:641px;font-family:'Liberation Sans',sans-serif;font-size:12px;line-height:12px;color:#000;letter-spacing:0.6px">3760</div>
<div class="t" style="left:673px;top:642px;color:#000;">制单人</div>
<div class="a" style="left:724px;top:640px;width:84px;height:17px;border-bottom:1px solid #7a7a7a;background:#ebebeb;"></div>
<div class="t" style="left:726px;top:640px;color:#8c8c8c;">系统管理员</div>
<div class="t" style="left:818px;top:642px;color:#000;">制单日期</div>
<div class="a" style="left:884px;top:640px;width:102px;height:17px;border-bottom:1px solid #7a7a7a;background:#ebebeb;"></div>
<div class="a" style="left:885px;top:642px;font-family:'Liberation Serif',serif;font-size:14px;line-height:13px;white-space:nowrap;color:#8c8c8c"><span style="display:inline-block;width:7px;text-align:center">2</span><span style="display:inline-block;width:7px;text-align:center">0</span><span style="display:inline-block;width:7px;text-align:center">1</span><span style="display:inline-block;width:7px;text-align:center">7</span><span style="display:inline-block;width:7px;text-align:center">–</span><span style="display:inline-block;width:7px;text-align:center">0</span><span style="display:inline-block;width:7px;text-align:center">4</span><span style="display:inline-block;width:7px;text-align:center">–</span><span style="display:inline-block;width:7px;text-align:center">1</span><span style="display:inline-block;width:7px;text-align:center">1</span></div>

<!-- status bar -->
<div class="a" style="left:8px;top:674px;width:1125px;height:27px;background:linear-gradient(#e6e6e6,#f0f0f0 4px)"></div>

<!-- status -->
<svg class="a" style="left:12px;top:681px" width="16" height="16" viewBox="0 0 16 16"><defs><linearGradient id="lr" x1="0" y1="0" x2="0" y2="1"><stop offset="0" stop-color="#f04040"/><stop offset="1" stop-color="#c81616"/></linearGradient></defs><rect x="0" y="0" width="16" height="16" rx="2.5" fill="url(#lr)"/><svg x="0.5" y="0" width="15" height="15" viewBox="40 60 600 600"><g fill="#fff"><path d="M105,205 C150,190 195,190 208,240 L218,300 C290,220 380,160 470,125 L462,215 C360,262 292,322 258,392 C238,442 248,498 292,522 C200,522 132,472 117,402 C106,332 118,262 105,205 Z"/><path d="M558,302 C545,420 462,562 302,612 C222,625 140,592 98,468 C150,542 232,562 302,542 C402,512 452,452 482,392 C422,422 372,452 322,472 C382,402 462,342 558,302 Z"/><circle cx="520" cy="110" r="16"/><circle cx="550" cy="142" r="13"/><circle cx="542" cy="205" r="13"/><circle cx="485" cy="178" r="12"/><circle cx="475" cy="232" r="11"/></g></svg></svg>
<div class="a" style="left:31px;top:683px;color:#000;font-size:12px;line-height:12px">应用中心：</div>
<div class="a" style="left:91px;top:683px;font-family:'Liberation Mono',monospace;font-size:12px;line-height:12px;letter-spacing:-1.2px;color:#000">127.0.0.1:7093</div>
<div class="a" style="left:207px;top:680px;width:1px;height:19px;background:#c4c4c4;box-shadow:1px 0 0 #fff"></div>
<svg class="a" style="left:215px;top:681px" width="16" height="16" viewBox="0 0 16 16"><defs><radialGradient id="gs" cx="0.4" cy="0.3" r="0.75"><stop offset="0" stop-color="#90e070"/><stop offset="1" stop-color="#148a18"/></radialGradient></defs><circle cx="8" cy="8" r="7.5" fill="url(#gs)" stroke="#1e7a1e" stroke-width="0.6"/><path d="M4 8 L7 11 L12 5" fill="none" stroke="#fff" stroke-width="2.2"/></svg>
<div class="a" style="left:233px;top:683px;color:#000;font-size:12px;line-height:12px">连接状态：正常</div>
<div class="a" style="left:330px;top:680px;width:1px;height:19px;background:#c4c4c4;box-shadow:1px 0 0 #fff"></div>
<div class="a" style="left:344px;top:683px;color:#000;font-size:12px;line-height:12px">账套：演示账套</div>
<div class="a" style="left:553px;top:680px;width:1px;height:19px;background:#c4c4c4;box-shadow:1px 0 0 #fff"></div>
<div class="a" style="left:568px;top:683px;color:#000;font-size:12px;line-height:12px">操作员：系统管理员</div>
<div class="a" style="left:676px;top:683px;font-family:'Liberation Mono',monospace;font-size:12px;line-height:12px;letter-spacing:-1.2px;color:#000">(admin)</div>
<div class="a" style="left:736px;top:680px;width:1px;height:19px;background:#c4c4c4;box-shadow:1px 0 0 #fff"></div>
<div class="a" style="left:751px;top:683px;color:#000;font-size:12px;line-height:12px">正式版</div>
<div class="a" style="left:793px;top:683px;color:#000;font-size:12px;line-height:12px">授权序列号：</div>
<div class="a" style="left:865px;top:683px;font-family:'Liberation Mono',monospace;font-size:12px;line-height:12px;letter-spacing:-1.2px;color:#000">051696989</div>
<div class="a" style="left:1110px;top:680px;width:1px;height:19px;background:#c4c4c4;box-shadow:1px 0 0 #fff"></div>
<svg class="a" style="left:1122px;top:690px" width="10" height="10" viewBox="0 0 10 10"><g fill="#a0a0a0"><rect x="7" y="1" width="1.5" height="1.5"/><rect x="4" y="4" width="1.5" height="1.5"/><rect x="7" y="4" width="1.5" height="1.5"/><rect x="1" y="7" width="1.5" height="1.5"/><rect x="4" y="7" width="1.5" height="1.5"/><rect x="7" y="7" width="1.5" height="1.5"/></g></svg>
</body></html>
